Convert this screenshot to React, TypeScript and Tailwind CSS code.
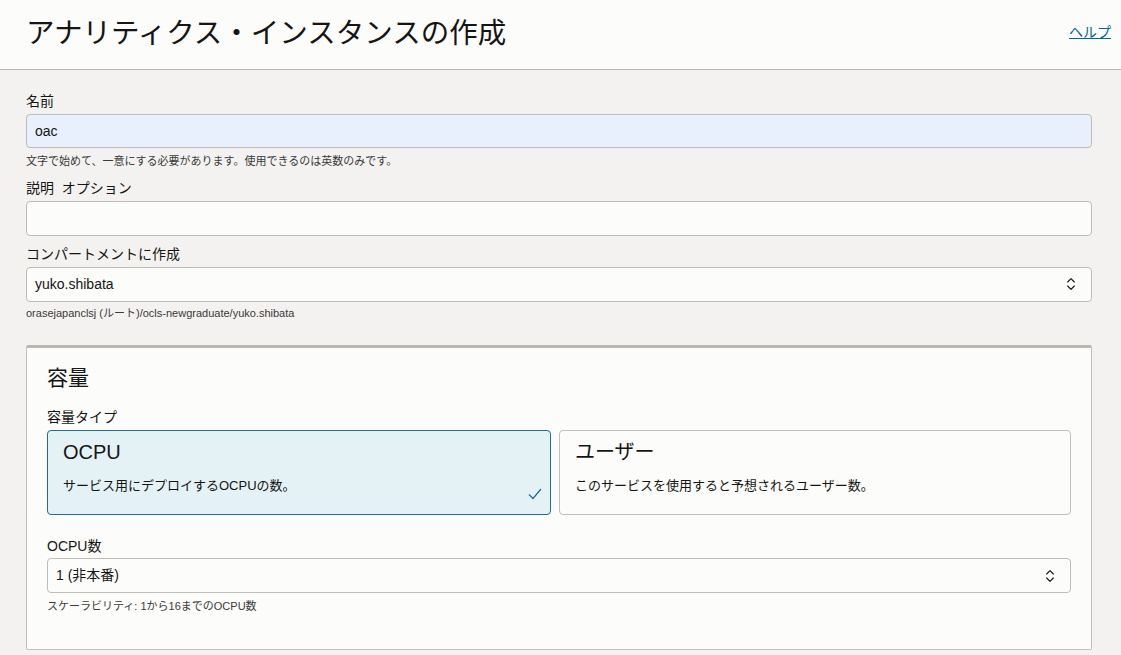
import { ChevronsUpDown } from "lucide-react";

const font = { fontFamily: '"Liberation Sans", "Noto Sans CJK JP", sans-serif' };

function Label({ children }: { children: React.ReactNode }) {
  return <div className="text-[14px] leading-[18px] text-[#161513] mb-[4px]">{children}</div>;
}

function Select({ value }: { value: string }) {
  return (
    <div className="h-[35px] flex items-center justify-between rounded-[4px] border border-[#bfbbb6] bg-[#fcfcfb] pl-[8px] pr-[12px] text-[14px] text-[#161513]">
      <span>{value}</span>
      <ChevronsUpDown className="w-[16px] h-[16px] text-[#161513]" strokeWidth={1.7} />
    </div>
  );
}

export default function App() {
  return (
    <div className="min-h-[655px] bg-[#f3f2f1] text-[#161513]" style={font}>
      <header className="h-[70px] bg-[#fcfcfb] border-b border-[#bcb9b5] flex items-center justify-between pl-[26px] pr-[10px]">
        <h1 className="text-[28.5px] font-normal leading-none pb-[3px]">アナリティクス・インスタンスの作成</h1>
        <a className="text-[14px] text-[#00688c] underline pb-[5px]">ヘルプ</a>
      </header>

      <main className="px-[26px] pt-[22px] pr-[29px]">
        <Label>名前</Label>
        <div className="h-[34px] mt-[1px] flex items-center rounded-[4px] border border-[#bfbbb6] bg-[#e8f0fe] px-[8px] text-[14px]">oac</div>
        <div className="text-[11px] text-[#3b3a38] mt-[5px]">文字で始めて、一意にする必要があります。使用できるのは英数のみです。</div>

        <div className="mt-[9px]">
          <Label>説明&nbsp;&nbsp;オプション</Label>
          <div className="h-[35px] rounded-[4px] border border-[#bfbbb6] bg-[#fcfcfb]" />
        </div>

        <div className="mt-[9px]">
          <Label>コンパートメントに作成</Label>
          <Select value="yuko.shibata" />
          <div className="text-[11px] text-[#3b3a38] mt-[3px]">orasejapanclsj (ルート)/ocls-newgraduate/yuko.shibata</div>
        </div>

        <section className="mt-[24px] bg-[#fcfcfb] border border-[#c3bfba] border-t-[3px] border-t-[#bab6b1] rounded-[2px] px-[20px] pt-[16px] pb-[34px]">
          <h2 className="text-[21px] leading-[28px] font-normal">容量</h2>
          <div className="mt-[16px]">
            <Label>容量タイプ</Label>
          </div>
          <div className="grid grid-cols-[504px_1fr] gap-[8px]">
            <div className="relative h-[85px] rounded-[4px] border border-[#1d6e8f] bg-[#e4f1f5] px-[15px] pt-[9px]">
              <div className="text-[20px] leading-[24px]">OCPU</div>
              <div className="text-[13px] mt-[12px]">サービス用にデプロイするOCPUの数。</div>
              <svg className="absolute right-[8px] bottom-[14px] w-[14px] h-[12px]" viewBox="0 0 14 12" fill="none">
                <path d="M1 6.5 L5 10.5 L13 1" stroke="#1d6e8f" strokeWidth="1.2" />
              </svg>
            </div>
            <div className="h-[85px] rounded-[4px] border border-[#c3bfba] bg-[#fcfcfb] px-[15px] pt-[9px]">
              <div className="text-[20px] leading-[24px]">ユーザー</div>
              <div className="text-[13px] mt-[12px]">このサービスを使用すると予想されるユーザー数。</div>
            </div>
          </div>

          <div className="mt-[22px]">
            <Label>OCPU数</Label>
            <div className="-mt-[1px]">
              <Select value="1 (非本番)" />
            </div>
            <div className="text-[11px] text-[#3b3a38] mt-[5px]">スケーラビリティ: 1から16までのOCPU数</div>
          </div>
        </section>
      </main>
    </div>
  );
}
